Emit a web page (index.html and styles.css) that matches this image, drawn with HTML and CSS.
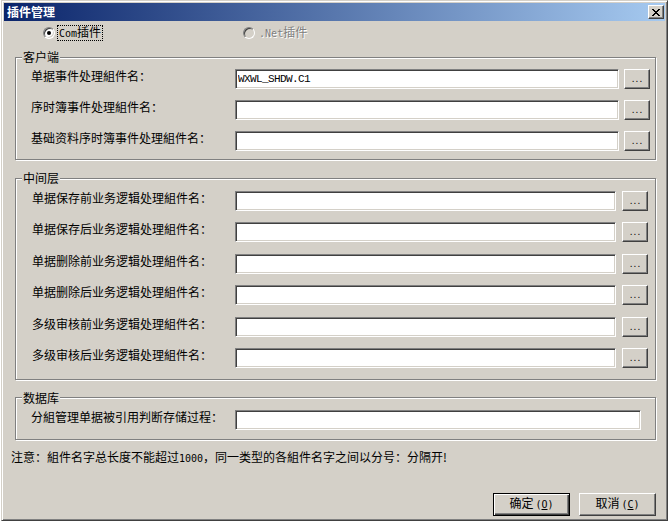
FILE: index.html
```html
<!DOCTYPE html>
<html lang="zh-CN">
<head>
  <meta charset="UTF-8">
  <title>插件管理</title>
  <link rel="stylesheet" href="styles.css">
</head>
<body>
  <div class="window">
    <div class="titlebar">
      <span class="title">插件管理</span>
      <span class="close">
        <svg width="8" height="7" viewBox="0 0 8 7" shape-rendering="crispEdges">
          <path d="M0 0h2v1H0zM6 0h2v1H6zM1 1h2v1H1zM5 1h2v1H5zM2 2h4v1H2zM3 3h2v1H3zM2 4h4v1H2zM1 5h2v1H1zM5 5h2v1H5zM0 6h2v1H0zM6 6h2v1H6z" fill="#000"/>
        </svg>
      </span>
    </div>

    <div class="radios">
      <label class="opt">
        <span class="dot checked"></span>
        <span class="cap focus"><span class="lat">Com</span>插件</span>
      </label>
      <label class="opt disabled">
        <span class="dot"></span>
        <span class="cap"><span class="lat">.Net</span>插件</span>
      </label>
    </div>

    <fieldset class="group">
      <legend>客户端</legend>
      <div class="rows client">
        <span class="label">单据事件处理組件名：</span>
        <input class="field" type="text" value="WXWL_SHDW.C1">
        <button class="more">...</button>

        <span class="label">序时簿事件处理組件名：</span>
        <input class="field" type="text">
        <button class="more">...</button>

        <span class="label">基础资料序时簿事件处理組件名：</span>
        <input class="field" type="text">
        <button class="more">...</button>
      </div>
    </fieldset>

    <fieldset class="group">
      <legend>中间层</legend>
      <div class="rows middle">
        <span class="label">单据保存前业务逻辑处理組件名：</span>
        <input class="field" type="text">
        <button class="more">...</button>

        <span class="label">单据保存后业务逻辑处理組件名：</span>
        <input class="field" type="text">
        <button class="more">...</button>

        <span class="label">单据删除前业务逻辑处理組件名：</span>
        <input class="field" type="text">
        <button class="more">...</button>

        <span class="label">单据删除后业务逻辑处理組件名：</span>
        <input class="field" type="text">
        <button class="more">...</button>

        <span class="label">多级审核前业务逻辑处理組件名：</span>
        <input class="field" type="text">
        <button class="more">...</button>

        <span class="label">多级审核后业务逻辑处理組件名：</span>
        <input class="field" type="text">
        <button class="more">...</button>
      </div>
    </fieldset>

    <fieldset class="group">
      <legend>数据库</legend>
      <div class="rows db">
        <span class="label">分組管理单据被引用判断存储过程：</span>
        <input class="field" type="text">
      </div>
    </fieldset>

    <p class="note">注意：組件名字总长度不能超过<span class="lat">1000</span>，同一类型的各組件名字之间以分号：分隔开!</p>

    <div class="actions">
      <button class="btn default">确定<span class="lat">(<u>O</u>)</span></button>
      <button class="btn">取消<span class="lat">(<u>C</u>)</span></button>
    </div>
  </div>
</body>
</html>
```

FILE: styles.css
```css
body {
  margin: 0;
  width: 671px;
  height: 523px;
  overflow: hidden;
  background: #fff;
  font-family: "Noto Sans CJK SC", "Noto Sans", sans-serif;
  font-size: 12px;
  color: #000;
}

.lat {
  font-family: "DejaVu Sans Mono", monospace;
  font-size: 10px;
}

/* classic window frame */
.window {
  margin-left: 1px;
  width: 667px;
  height: 521px;
  box-sizing: border-box;
  border: 1px solid;
  border-color: #d4d0c8 #404040 #404040 #d4d0c8;
  box-shadow: inset 1px 1px #fff, inset -1px -1px #808080;
  padding: 2px;
  background: #d4d0c8;
}

.titlebar {
  display: flex;
  align-items: center;
  height: 18px;
  padding-left: 3px;
  background: linear-gradient(to right, #0a246a, #a6caf0);
}
.title {
  color: #fff;
  font-weight: bold;
  line-height: 18px;
}
.close {
  display: flex;
  align-items: center;
  justify-content: center;
  margin-left: auto;
  margin-right: 1px;
  width: 16px;
  height: 14px;
  box-sizing: border-box;
  background: #d4d0c8;
  border: 1px solid;
  border-color: #fff #404040 #404040 #fff;
  box-shadow: inset -1px -1px #808080;
}

/* radio choice */
.radios {
  display: flex;
  align-items: center;
  height: 14px;
  margin-top: 5px;
  padding-left: 39px;
}
.opt {
  display: flex;
  align-items: center;
}
.opt.disabled {
  margin-left: 140px;
  color: #808080;
  text-shadow: 1px 1px #fff;
}
.dot {
  position: relative;
  width: 12px;
  height: 12px;
  box-sizing: border-box;
  border-radius: 50%;
  border: 1px solid;
  border-color: #808080 #fff #fff #808080;
  box-shadow: inset 1px 1px #404040, inset -1px -1px #d4d0c8;
  background: #fff;
}
.opt.disabled .dot {
  background: #d4d0c8;
}
.dot.checked::after {
  content: "";
  position: absolute;
  left: 3px;
  top: 3px;
  width: 4px;
  height: 4px;
  border-radius: 50%;
  background: #000;
}
.cap {
  margin-left: 2px;
  padding: 0 2px;
  line-height: 14px;
}
.focus {
  outline: 1px dotted #000;
  outline-offset: -1px;
}

/* group boxes */
.group {
  width: 641px;
  box-sizing: border-box;
  margin: 10px 0 0 11px;
  padding: 0;
  min-width: 0;
  border: 1px solid #808080;
  box-shadow: inset 1px 1px #fff, 1px 1px #fff;
}
.group + .group {
  margin-top: 11px;
}
.group legend {
  margin-left: 6px;
  padding: 0 1px;
  line-height: 14px;
  background: #d4d0c8;
}

.rows {
  display: grid;
  align-items: start;
}
.rows.client {
  grid-template-columns: 199px 384px 26px;
  column-gap: 5px;
  row-gap: 11px;
  padding: 5px 5px 8px 15px;
}
.rows.middle {
  grid-template-columns: 197px 381px 26px;
  column-gap: 6px;
  row-gap: 11.4px;
  padding: 6px 7px 11px 16px;
}
.rows.db {
  grid-template-columns: 204px 406px;
  padding: 5px 14px 9px 15px;
}

.label {
  line-height: 14px;
  white-space: nowrap;
}

.field {
  width: 100%;
  height: 20px;
  margin: 0;
  box-sizing: border-box;
  padding: 0 0 1px 2px;
  border: 1px solid;
  border-color: #808080 #fff #fff #808080;
  box-shadow: inset 1px 1px #404040, inset -1px -1px #d4d0c8;
  background: #fff;
  font-family: "Liberation Mono", monospace;
  font-size: 11px;
  letter-spacing: -0.6px;
  line-height: 16px;
  color: #000;
  outline: none;
}

.more,
.btn {
  margin: 0;
  padding: 0;
  box-sizing: border-box;
  background: #d4d0c8;
  border: 1px solid;
  border-color: #fff #404040 #404040 #fff;
  box-shadow: inset -1px -1px #808080;
  color: #000;
}
.more {
  height: 20px;
  font-family: "Liberation Sans", sans-serif;
  font-size: 10px;
  letter-spacing: 1px;
  padding-left: 1px;
  line-height: 14px;
}

.note {
  margin: 10px 0 0 7px;
  line-height: 14px;
}

.actions {
  display: flex;
  justify-content: flex-end;
  gap: 9px;
  margin-top: 27px;
  padding-right: 9px;
}
.btn {
  width: 77px;
  height: 23px;
  font-family: "Noto Sans CJK SC", sans-serif;
  font-size: 12px;
  line-height: 14px;
}
.btn .lat {
  margin-left: 2px;
}
.btn.default {
  border: 1px solid #000;
  box-shadow: inset 1px 1px #fff, inset -1px -1px #404040, inset -2px -2px #808080;
}
```
